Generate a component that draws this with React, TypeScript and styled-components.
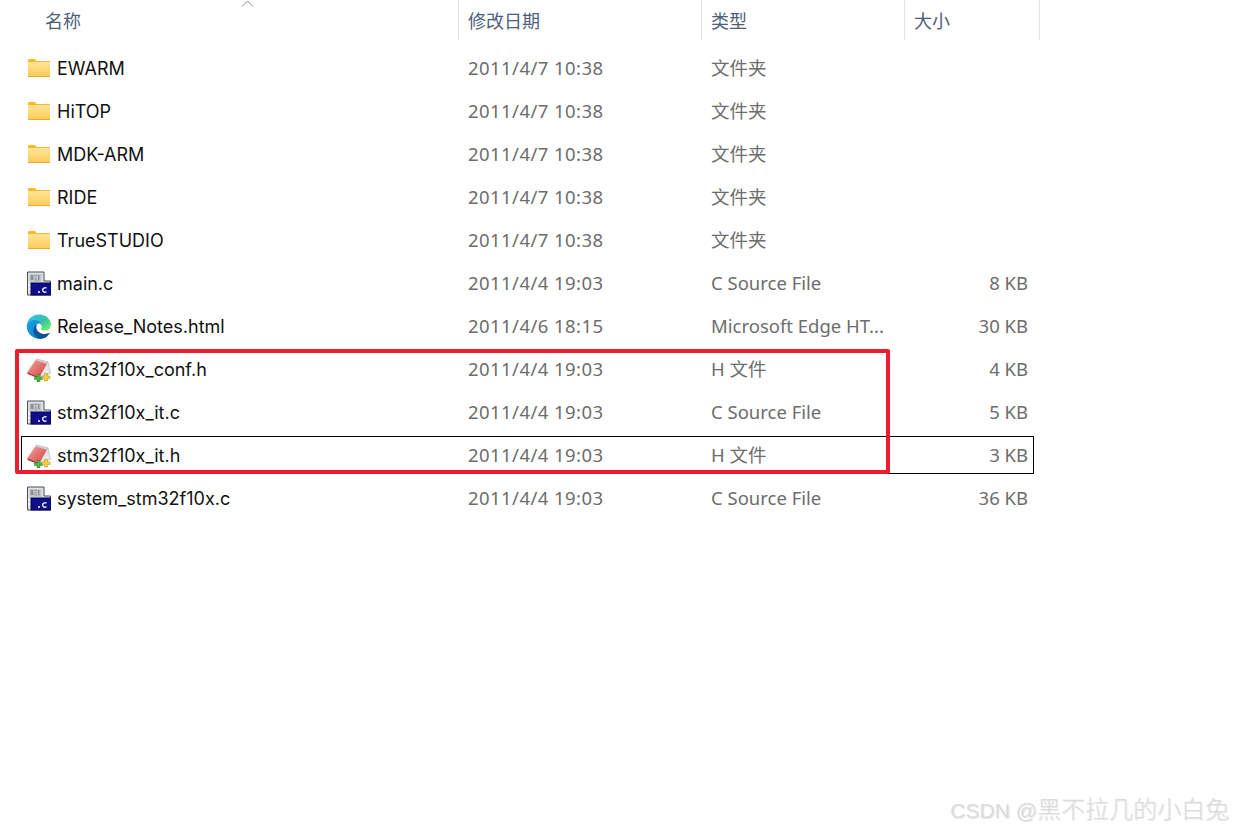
import React from "react";
import styled, { createGlobalStyle } from "styled-components";

const Global = createGlobalStyle`
  html, body { margin: 0; padding: 0; background: #fff; }
  body { font-family: Inter, "Noto Sans", "Noto Sans CJK SC", sans-serif; }
`;

const Page = styled.div`
  position: relative;
  width: 1233px;
  height: 831px;
  overflow: hidden;
  background: #fff;
`;

const Header = styled.div`
  display: grid;
  grid-template-columns: 459px 243px 203px 135px;
  width: 1040px;
  height: 40px;
`;

const HeaderCell = styled.div<{ $pad: number }>`
  position: relative;
  display: flex;
  align-items: center;
  padding-left: ${(p) => p.$pad}px;
  padding-bottom: 1px;
  box-sizing: border-box;
  border-right: 1px solid #e5e5e5;
  color: #4c607a;
  font-family: "Noto Sans CJK SC", sans-serif;
  font-size: 18px;
`;

const SortArrow = styled.svg`
  position: absolute;
  left: 241px;
  top: 0;
`;

const List = styled.div`
  position: relative;
  display: flex;
  flex-direction: column;
  gap: 5px;
  width: 1013px;
  margin: 9px 0 0 21px;
`;

const Row = styled.div<{ $focus?: boolean }>`
  display: grid;
  grid-template-columns: 437px 243px 203px 123px;
  align-items: center;
  height: 38px;
  box-sizing: border-box;
  border: 1px solid ${(p) => (p.$focus ? "#000" : "transparent")};
  padding-bottom: 1px;
`;

const NameCell = styled.div`
  display: flex;
  align-items: center;
  gap: 6px;
  padding: 2px 0 0 4px;
  color: #111;
  font-size: 18px;
  white-space: nowrap;
`;

const IconBox = styled.span`
  display: flex;
  width: 25px;
  height: 25px;
  flex: none;
  margin-top: -1px;
`;

const DateCell = styled.div`
  color: #6d6d6d;
  font-family: "Noto Sans", sans-serif;
  font-size: 18.5px;
  letter-spacing: 0.44px;
  padding-left: 9px;
  white-space: nowrap;
`;

const TypeCell = styled.div`
  color: #6d6d6d;
  font-family: "Noto Sans", "Noto Sans CJK SC", sans-serif;
  font-size: 18.5px;
  line-height: 25px;
  padding-left: 9px;
  white-space: nowrap;
`;

const SizeCell = styled.div`
  color: #6d6d6d;
  font-family: "Noto Sans", sans-serif;
  font-size: 18.5px;
  text-align: right;
  white-space: nowrap;
`;

const Highlight = styled.div`
  position: absolute;
  left: 15px;
  top: 349px;
  width: 875px;
  height: 125px;
  box-sizing: border-box;
  border: 4px solid #ee1c2e;
  border-radius: 2px;
  pointer-events: none;
`;

const Watermark = styled.div`
  position: absolute;
  right: 4px;
  bottom: 5px;
  color: #dcdcdc;
  font-family: "Liberation Sans", "Noto Sans CJK SC", sans-serif;
  font-size: 24px;
  font-weight: 300;
  line-height: 30px;
  white-space: nowrap;
  text-shadow: 1px 1px 1px rgba(0, 0, 0, 0.1);
`;

const WatermarkLatin = styled.span`
  font-size: 21px;
`;

const FolderIcon = () => (
  <svg width="25" height="25" viewBox="0 0 25 25">
    <defs>
      <linearGradient id="fld" x1="0" y1="0" x2="0" y2="1">
        <stop offset="0" stopColor="#ffe596" />
        <stop offset="1" stopColor="#fdcb58" />
      </linearGradient>
    </defs>
    <path d="M2 4.500C2 3.700 2.500 3 3.300 3H9L10.500 5H24V8H2Z" fill="#fdb91f" />
    <rect x="2" y="6" width="22" height="15" fill="url(#fld)" />
    <rect x="2" y="20" width="22" height="1" fill="#e9a92f" />
    <rect x="10" y="5" width="14" height="1" fill="#f0b840" />
  </svg>
);

const CFileIcon = () => (
  <svg width="25" height="25" viewBox="0 0 25 25">
    <path d="M1.500 1H18V10H24.500V24H1.500Z" fill="#dfe3e6" stroke="#4b4f55" strokeWidth="1" />
    <rect x="3.500" y="3" width="12" height="8" fill="#c4c9cd" />
    <path d="M4.500 4h3v5h-3zM8.500 4h2.500v1h-2.500zM8.500 6.500h2v1h-2zM8.500 8.500h2.500v1h-2.500zM12 4h1.500v5.500H12z" fill="#8c9299" />
    <path d="M2 13h3v2H2zM2 17h3v2H2z" fill="#f2f4f5" />
    <rect x="5" y="12" width="20" height="12" fill="#0f0f8c" stroke="#05054d" strokeWidth="1" />
    <circle cx="13" cy="21" r="1" fill="#fff" />
    <path d="M20.500 17.300c-.6-.5-1.300-.7-2-.5-1.300.3-1.900 1.400-1.800 2.500.1 1.300 1.300 2.100 2.500 1.900.5-.1 1-.3 1.300-.6" fill="none" stroke="#fff" strokeWidth="1.300" />
  </svg>
);

const EdgeIcon = () => (
  <svg width="25" height="25" viewBox="-8 -4 264 264">
    <defs>
      <linearGradient id="edgeA" x1="0" y1="0.5" x2="1" y2="0.5">
        <stop offset="0" stopColor="#0c59a4" />
        <stop offset="1" stopColor="#114a8b" />
      </linearGradient>
      <linearGradient id="edgeB" x1="0" y1="0.2" x2="1" y2="0.9">
        <stop offset="0" stopColor="#1b9de2" />
        <stop offset="1" stopColor="#0f7fc9" />
      </linearGradient>
      <linearGradient id="edgeC" x1="0.1" y1="0.1" x2="0.9" y2="0.8">
        <stop offset="0" stopColor="#35c1f1" />
        <stop offset="0.6" stopColor="#34c1a5" />
        <stop offset="1" stopColor="#66eb6e" />
      </linearGradient>
    </defs>
    <path d="M235.680 195.460a93.730 93.730 0 0 1-10.540 4.710 101.870 101.870 0 0 1-35.900 6.460c-47.320 0-88.540-32.550-88.540-74.320A31.480 31.480 0 0 1 117.130 105c-42.800 1.800-53.800 46.400-53.800 72.530 0 73.880 68.090 81.370 82.760 81.370 7.910 0 19.840-2.300 27-4.560l1.310-.44a128.340 128.340 0 0 0 66.600-52.800 4 4 0 0 0-5.320-5.640Z" fill="url(#edgeA)" />
    <path d="M105.730 241.420A79.200 79.200 0 0 1 83 220.080a80.720 80.720 0 0 1 29.530-120c3.120-1.470 8.450-4.130 15.540-4a32.350 32.350 0 0 1 25.690 13 31.880 31.880 0 0 1 6.360 18.660c0-.21 24.460-79.600-80-79.600-43.900 0-80 41.660-80 78.210a130.150 130.150 0 0 0 12.110 56 128 128 0 0 0 156.380 67.110 75.550 75.550 0 0 1-63-8.110Z" fill="url(#edgeB)" />
    <path d="M152.310 148.860c-.81 1.050-3.300 2.500-3.300 5.660 0 2.610 1.700 5.120 4.720 7.230 14.380 10 41.490 8.680 41.560 8.680a59.560 59.560 0 0 0 30.270-8.350A61.380 61.380 0 0 0 256 109.200c.26-22.410-8-37.310-11.340-43.910C223.460 23.760 177.720 0 128 0A128 128 0 0 0 0 126.200c.48-36.540 36.800-66.050 80-66.050 3.500 0 23.460.34 42 10.070a72.590 72.590 0 0 1 30.930 29.340c6.120 10.650 7.210 24.170 7.210 29.560s-2.690 13.370-7.830 20.740Z" fill="url(#edgeC)" />
  </svg>
);

const HFileIcon = () => (
  <svg width="25" height="25" viewBox="0 0 25 25">
    <defs>
      <linearGradient id="pad" x1="0" y1="0" x2="1" y2="1">
        <stop offset="0" stopColor="#f0a8a4" />
        <stop offset="1" stopColor="#d63f3a" />
      </linearGradient>
    </defs>
    <path d="M13 3L22 5 24.500 16 15 21Z" fill="#e3e7ec" stroke="#a9b2bd" strokeWidth=".6" />
    <path d="M10.500 1.500L22 5 13.500 20 1.500 15Z" fill="url(#pad)" />
    <path d="M10.500 1.500L22 5 21 7 9.300 3.300Z" fill="#cfcfcf" />
    <path d="M1.500 15L13.500 20 13 21.500 1.500 17Z" fill="#a83a36" />
    <path d="M8.500 20h2.500v-2.500h3V20h2.500v2.500H14V25h-3v-2.500H8.500Z" fill="#4cb648" stroke="#2c7d2b" strokeWidth=".5" />
    <path d="M16 19h2.500v-2.500h3V19h2.500v2.500h-2.500V24h-3v-2.500H16Z" fill="#f7cd3c" stroke="#b58c16" strokeWidth=".5" />
  </svg>
);

type Kind = "folder" | "c" | "edge" | "h";

const icons: Record<Kind, React.ComponentType> = {
  folder: FolderIcon,
  c: CFileIcon,
  edge: EdgeIcon,
  h: HFileIcon,
};

const files: { name: string; date: string; type: string; size: string; kind: Kind; focus?: boolean }[] = [
  { name: "EWARM", date: "2011/4/7 10:38", type: "文件夹", size: "", kind: "folder" },
  { name: "HiTOP", date: "2011/4/7 10:38", type: "文件夹", size: "", kind: "folder" },
  { name: "MDK-ARM", date: "2011/4/7 10:38", type: "文件夹", size: "", kind: "folder" },
  { name: "RIDE", date: "2011/4/7 10:38", type: "文件夹", size: "", kind: "folder" },
  { name: "TrueSTUDIO", date: "2011/4/7 10:38", type: "文件夹", size: "", kind: "folder" },
  { name: "main.c", date: "2011/4/4 19:03", type: "C Source File", size: "8 KB", kind: "c" },
  { name: "Release_Notes.html", date: "2011/4/6 18:15", type: "Microsoft Edge HT...", size: "30 KB", kind: "edge" },
  { name: "stm32f10x_conf.h", date: "2011/4/4 19:03", type: "H 文件", size: "4 KB", kind: "h" },
  { name: "stm32f10x_it.c", date: "2011/4/4 19:03", type: "C Source File", size: "5 KB", kind: "c" },
  { name: "stm32f10x_it.h", date: "2011/4/4 19:03", type: "H 文件", size: "3 KB", kind: "h", focus: true },
  { name: "system_stm32f10x.c", date: "2011/4/4 19:03", type: "C Source File", size: "36 KB", kind: "c" },
];

export default function App() {
  return (
    <Page>
      <Global />
      <Header>
        <HeaderCell $pad={45}>
          名称
          <SortArrow width="13" height="8" viewBox="0 0 13 8">
            <path d="M1 6.500L6.500 1 12 6.500" fill="none" stroke="#8a8a8a" strokeWidth="1" />
          </SortArrow>
        </HeaderCell>
        <HeaderCell $pad={9}>修改日期</HeaderCell>
        <HeaderCell $pad={9}>类型</HeaderCell>
        <HeaderCell $pad={9}>大小</HeaderCell>
      </Header>
      <List>
        {files.map((f) => {
          const Icon = icons[f.kind];
          return (
            <Row key={f.name} $focus={f.focus}>
              <NameCell>
                <IconBox>
                  <Icon />
                </IconBox>
                {f.name}
              </NameCell>
              <DateCell>{f.date}</DateCell>
              <TypeCell>{f.type}</TypeCell>
              <SizeCell>{f.size}</SizeCell>
            </Row>
          );
        })}
      </List>
      <Highlight />
      <Watermark>
        <WatermarkLatin>CSDN @</WatermarkLatin>黑不拉几的小白兔
      </Watermark>
    </Page>
  );
}
